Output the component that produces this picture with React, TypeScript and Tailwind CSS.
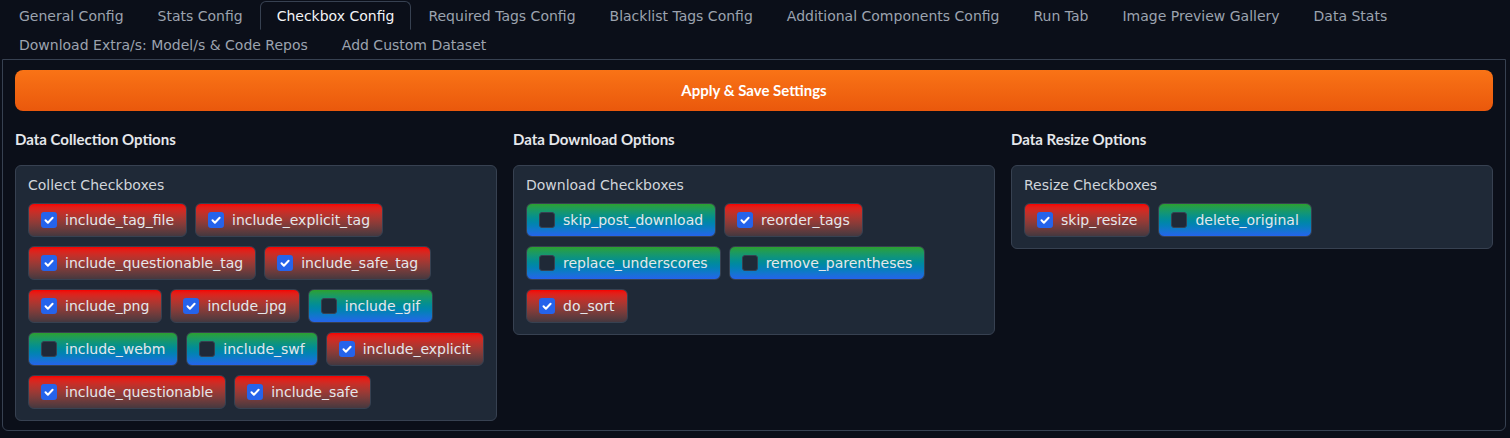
const tabs = [
  'General Config',
  'Stats Config',
  'Checkbox Config',
  'Required Tags Config',
  'Blacklist Tags Config',
  'Additional Components Config',
  'Run Tab',
  'Image Preview Gallery',
  'Data Stats',
  'Download Extra/s: Model/s & Code Repos',
  'Add Custom Dataset',
];

type Opt = { name: string; checked: boolean };

const groups: { title: string; label: string; options: Opt[] }[] = [
  {
    title: 'Data Collection Options',
    label: 'Collect Checkboxes',
    options: [
      { name: 'include_tag_file', checked: true },
      { name: 'include_explicit_tag', checked: true },
      { name: 'include_questionable_tag', checked: true },
      { name: 'include_safe_tag', checked: true },
      { name: 'include_png', checked: true },
      { name: 'include_jpg', checked: true },
      { name: 'include_gif', checked: false },
      { name: 'include_webm', checked: false },
      { name: 'include_swf', checked: false },
      { name: 'include_explicit', checked: true },
      { name: 'include_questionable', checked: true },
      { name: 'include_safe', checked: true },
    ],
  },
  {
    title: 'Data Download Options',
    label: 'Download Checkboxes',
    options: [
      { name: 'skip_post_download', checked: false },
      { name: 'reorder_tags', checked: true },
      { name: 'replace_underscores', checked: false },
      { name: 'remove_parentheses', checked: false },
      { name: 'do_sort', checked: true },
    ],
  },
  {
    title: 'Data Resize Options',
    label: 'Resize Checkboxes',
    options: [
      { name: 'skip_resize', checked: true },
      { name: 'delete_original', checked: false },
    ],
  },
];

function Chip({ name, checked }: Opt) {
  return (
    <label
      className={`flex h-[34px] items-center gap-2 rounded-md border border-[#374151] px-3 text-[14px] text-[#e5e7eb] ${
        checked
          ? 'bg-linear-to-b from-[#f50000] to-[#45383f]'
          : 'bg-linear-to-b from-[#2ca02c] to-[#2563eb]'
      }`}
    >
      {checked ? (
        <span className="flex h-4 w-4 items-center justify-center rounded-[3px] bg-[#2563eb]">
          <svg viewBox="0 0 16 16" className="h-4 w-4">
            <path d="M4.5 8.3l2.4 2.4L11.6 5.8" fill="none" stroke="white" strokeWidth="2" strokeLinecap="round" strokeLinejoin="round" />
          </svg>
        </span>
      ) : (
        <span className="h-4 w-4 rounded-[3px] border border-[#374151] bg-[#1f2937]" />
      )}
      <span>{name}</span>
    </label>
  );
}

export default function App() {
  return (
    <div className="h-[438px] w-full bg-[#0b0f19] font-['DejaVu_Sans',sans-serif]">
      {/* Tab nav */}
      <div className="flex flex-wrap pl-[2px] pt-[1px]">
        {tabs.map((t) => (
          <button
            key={t}
            className={`h-[29px] rounded-t-md border px-4 text-[14px] leading-none ${
              t === 'Checkbox Config'
                ? 'border-[#374151] border-b-transparent text-[#f3f4f6]'
                : 'border-transparent text-[#9ca3af]'
            }`}
          >
            {t}
          </button>
        ))}
      </div>

      {/* Tab panel */}
      <div className="ml-[2px] mr-[4px] rounded-b-md border border-[#374151] px-3 pb-[9px] pt-[10px]">
        <button className="h-[41px] w-full rounded-lg bg-linear-to-b from-[#f97316] to-[#ea580c] font-['Lato',sans-serif] text-[15px] font-bold text-white">
          Apply &amp; Save Settings
        </button>

        <div className="mt-4 grid grid-cols-3 items-start gap-4">
          {groups.map((g) => (
            <div key={g.title}>
              <div className="h-6 font-['Lato',sans-serif] text-[15px] font-bold leading-6 text-[#e5e7eb]">
                {g.title}
              </div>
              <div className="mt-[14px] rounded-md border border-[#374151] bg-[#1f2937] px-3 pb-[11px] pt-[9px]">
                <div className="mb-2 text-[14px] leading-5 text-[#d1d5db]">{g.label}</div>
                <div className="flex flex-wrap gap-x-2 gap-y-[9px]">
                  {g.options.map((o) => (
                    <Chip key={o.name} {...o} />
                  ))}
                </div>
              </div>
            </div>
          ))}
        </div>
      </div>
    </div>
  );
}
